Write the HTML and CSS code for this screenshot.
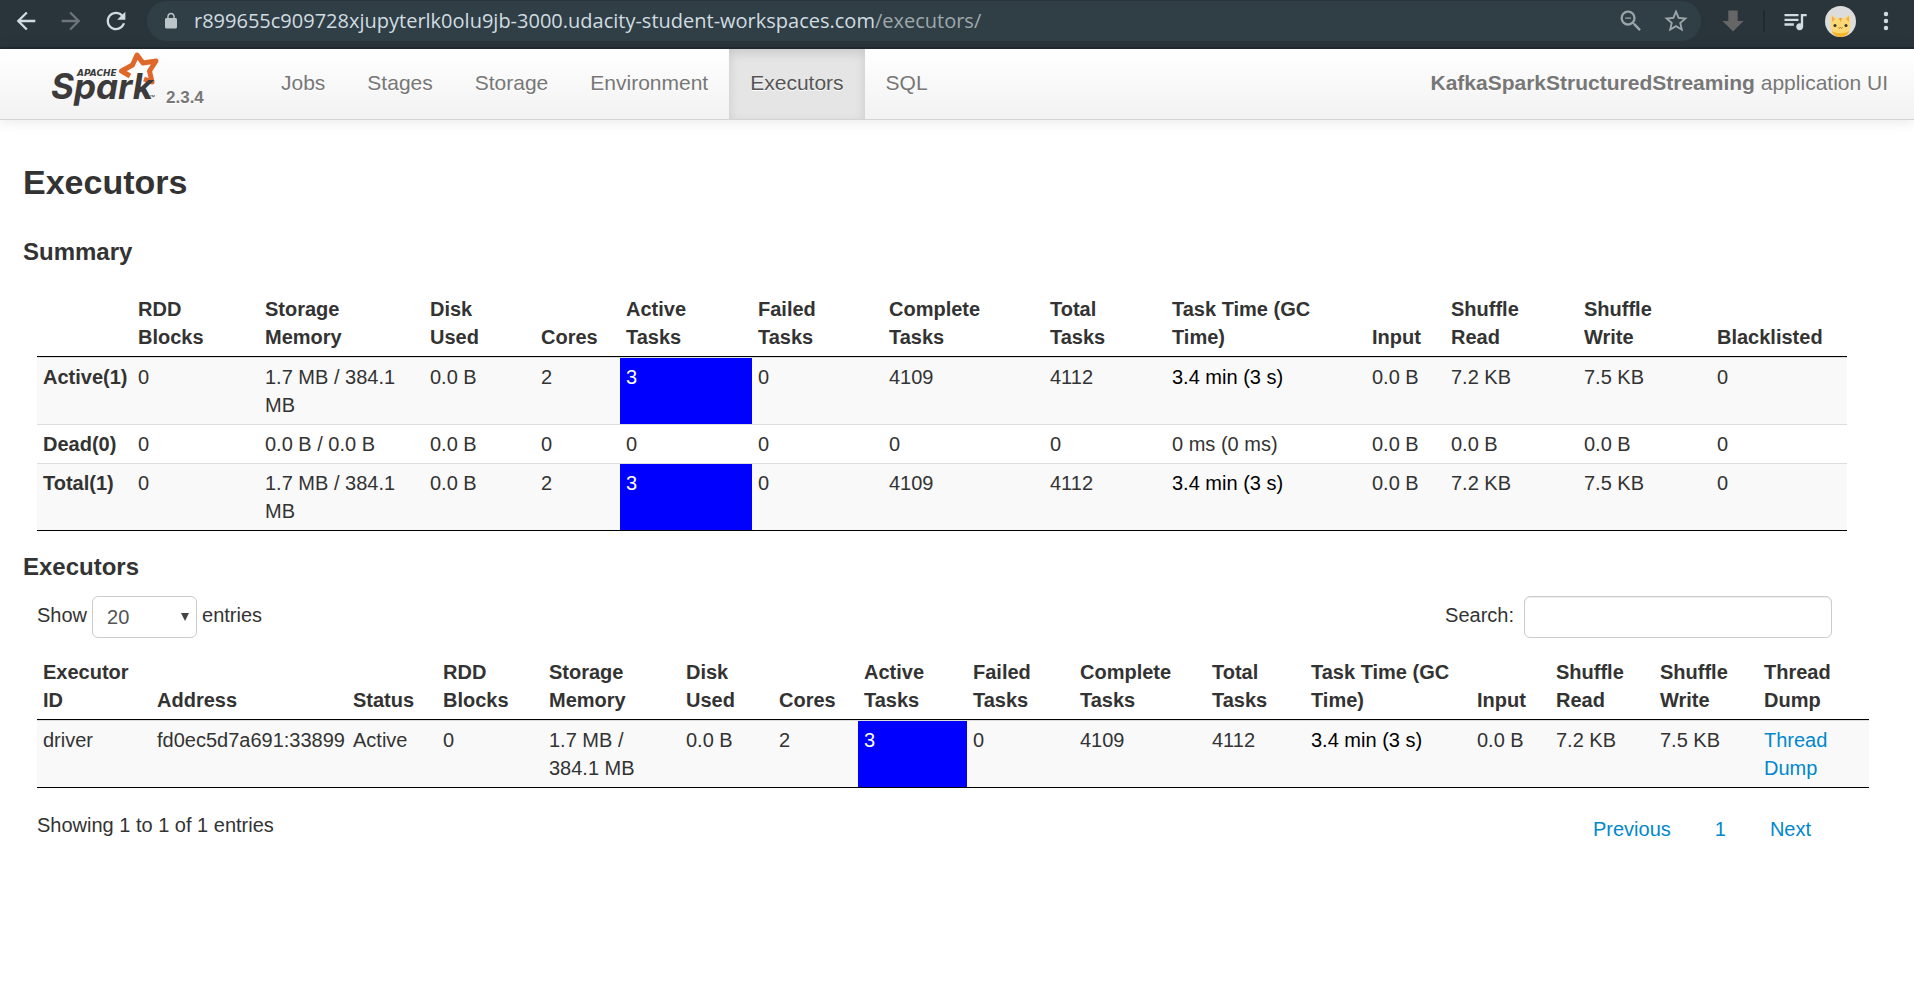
FILE: index.html
```html
<!DOCTYPE html>
<html lang="en">
<head>
<meta charset="utf-8">
<title>KafkaSparkStructuredStreaming - Executors</title>
<link rel="stylesheet" href="styles.css">
</head>
<body>
<header class="toolbar">
  <div class="history">
    <button class="icon-btn" aria-label="Back"><svg viewBox="0 0 24 24"><path d="M20 11H7.83l5.59-5.59L12 4l-8 8 8 8 1.41-1.41L7.83 13H20v-2z"/></svg></button>
    <button class="icon-btn dim" aria-label="Forward"><svg viewBox="0 0 24 24"><path d="M12 4l-1.41 1.41L16.17 11H4v2h12.17l-5.58 5.59L12 20l8-8z"/></svg></button>
    <button class="icon-btn" aria-label="Reload"><svg viewBox="0 0 24 24"><path d="M17.65 6.35C16.2 4.9 14.21 4 12 4c-4.42 0-7.99 3.58-7.99 8s3.57 8 7.99 8c3.73 0 6.84-2.55 7.73-6h-2.08c-.82 2.33-3.04 4-5.65 4-3.31 0-6-2.69-6-6s2.69-6 6-6c1.66 0 3.14.69 4.22 1.78L13 11h7V4l-2.35 2.35z"/></svg></button>
  </div>
  <div class="omnibox">
    <svg class="lock" viewBox="0 0 24 24"><path d="M18 8h-1V6c0-2.76-2.24-5-5-5S7 3.24 7 6v2H6c-1.100 0-2 .9-2 2v10c0 1.100.9 2 2 2h12c1.100 0 2-.9 2-2V10c0-1.100-.9-2-2-2zM8.900 6c0-1.710 1.390-3.100 3.100-3.100s3.100 1.390 3.100 3.100v2H8.900V6z"/></svg>
    <span class="url"><span class="host">r899655c909728xjupyterlk0olu9jb-3000.udacity-student-workspaces.com</span>/executors/</span>
    <button class="icon-btn soft" aria-label="Zoom"><svg viewBox="0 0 24 24"><path d="M15.500 14h-.79l-.28-.27A6.471 6.471 0 0 0 16 9.500 6.500 6.500 0 1 0 9.500 16c1.610 0 3.090-.59 4.230-1.570l.27.28v.79l5 4.990L20.490 19l-4.990-5zm-6 0C7.010 14 5 11.990 5 9.500S7.010 5 9.500 5 14 7.010 14 9.500 11.990 14 9.500 14zM7 9h5v1H7z"/></svg></button>
    <button class="icon-btn soft" aria-label="Bookmark"><svg viewBox="0 0 24 24"><path d="M22 9.240l-7.190-.62L12 2 9.190 8.630 2 9.240l5.460 4.730L5.820 21 12 17.270 18.180 21l-1.630-7.030L22 9.240zM12 15.400l-3.760 2.270 1-4.280-3.320-2.880 4.380-.38L12 6.100l1.710 4.040 4.380.38-3.320 2.880 1 4.280L12 15.400z"/></svg></button>
  </div>
  <div class="tools">
    <button class="icon-btn muted" aria-label="Downloads"><svg viewBox="0 0 24 24"><path d="M8 3h8v9h5l-9 9-9-9h5z"/></svg></button>
    <span class="separator"></span>
    <button class="icon-btn" aria-label="Media"><svg viewBox="0 0 24 24"><path d="M15 6H3v2h12V6zm0 4H3v2h12v-2zM3 16h8v-2H3v2zM17 6v8.180c-.31-.11-.65-.18-1-.18-1.660 0-3 1.340-3 3s1.340 3 3 3 3-1.340 3-3V8h3V6h-5z"/></svg></button>
    <button class="avatar" aria-label="Profile"><svg viewBox="0 0 31 31">
      <circle cx="15.500" cy="15.500" r="15.500" fill="#dcdcdc"/>
      <path d="M6.500 9c1.500 0 3 1.500 4.500 3h9c1.500-1.500 3-3 4.500-3 .8 3 .8 7 .8 10 0 7-4 11.500-9.800 11.500S5.700 26 5.700 19c0-3 0-7 .8-10z" fill="#fbd873"/>
      <path d="M7 10l3 3-3 3zM24 10l-3 3 3 3z" fill="#f3a95b"/>
      <path d="M6.500 25c5 3 13 3 18 0-1.500 3.500-4.500 6-9 6s-7.500-2.500-9-6z" fill="#f7b52c"/>
      <path d="M14 12l1.500 4 1.500-4z" fill="#e89a44"/>
      <circle cx="10" cy="19.500" r="1.500" fill="#333"/><circle cx="21" cy="19.500" r="1.500" fill="#333"/>
      <path d="M13.500 21.500q1 1.500 2 0 1 1.500 2 0" fill="none" stroke="#a5672c"/>
    </svg></button>
    <button class="icon-btn" aria-label="Menu"><svg viewBox="0 0 24 24"><circle cx="12" cy="6" r="1.900"/><circle cx="12" cy="12" r="1.900"/><circle cx="12" cy="18" r="1.900"/></svg></button>
  </div>
</header>

<nav class="navbar">
  <a class="brand" href="#">
    <svg class="logo" viewBox="48 50 112 60" role="img" aria-label="Apache Spark">
      <path d="M130 76L121.500 71L132.500 65L137 55L143 63L156 61L149.500 71L152 82L144 79" fill="none" stroke="#e0672a" stroke-width="5" stroke-linejoin="round"/>
      <text x="77" y="76" class="logo-small">APACHE</text>
      <text x="51" y="99" class="logo-name">Spark</text>
      <text x="149" y="99" class="logo-tm">™</text>
    </svg>
    <span class="version">2.3.4</span>
  </a>
  <ul class="tabs">
    <li><a href="#">Jobs</a></li>
    <li><a href="#">Stages</a></li>
    <li><a href="#">Storage</a></li>
    <li><a href="#">Environment</a></li>
    <li><a class="active" href="#">Executors</a></li>
    <li><a href="#">SQL</a></li>
  </ul>
  <p class="app-name"><strong>KafkaSparkStructuredStreaming</strong> application UI</p>
</nav>

<main class="page">
  <h1>Executors</h1>
  <h2>Summary</h2>
  <div class="summary">
    <table class="grid">
      <colgroup><col class="w95"><col class="w127"><col class="w165"><col class="w111"><col class="w85"><col class="w132"><col class="w131"><col class="w161"><col class="w122"><col class="w200"><col class="w79"><col class="w133"><col class="w133"><col class="w136"></colgroup>
      <thead>
        <tr><th></th><th>RDD<br>Blocks</th><th>Storage<br>Memory</th><th>Disk<br>Used</th><th>Cores</th><th>Active<br>Tasks</th><th>Failed<br>Tasks</th><th>Complete<br>Tasks</th><th>Total<br>Tasks</th><th>Task Time (GC<br>Time)</th><th>Input</th><th>Shuffle<br>Read</th><th>Shuffle<br>Write</th><th>Blacklisted</th></tr>
      </thead>
      <tbody>
        <tr><th>Active(1)</th><td>0</td><td>1.7 MB / 384.1 MB</td><td>0.0 B</td><td>2</td><td class="busy">3</td><td>0</td><td>4109</td><td>4112</td><td class="time">3.4 min (3 s)</td><td>0.0 B</td><td>7.2 KB</td><td>7.5 KB</td><td>0</td></tr>
        <tr><th>Dead(0)</th><td>0</td><td>0.0 B / 0.0 B</td><td>0.0 B</td><td>0</td><td>0</td><td>0</td><td>0</td><td>0</td><td>0 ms (0 ms)</td><td>0.0 B</td><td>0.0 B</td><td>0.0 B</td><td>0</td></tr>
        <tr><th>Total(1)</th><td>0</td><td>1.7 MB / 384.1 MB</td><td>0.0 B</td><td>2</td><td class="busy">3</td><td>0</td><td>4109</td><td>4112</td><td class="time">3.4 min (3 s)</td><td>0.0 B</td><td>7.2 KB</td><td>7.5 KB</td><td>0</td></tr>
      </tbody>
    </table>
  </div>

  <h2>Executors</h2>
  <div class="executors">
    <div class="controls">
      <label class="length">Show
        <span class="select-wrap"><select><option>20</option><option>40</option><option>60</option><option>100</option></select></span>
        entries</label>
      <label class="search">Search: <input type="search"></label>
    </div>
    <table class="grid">
      <colgroup><col class="w114"><col class="w196"><col class="w90"><col class="w106"><col class="w137"><col class="w93"><col class="w85"><col class="w109"><col class="w107"><col class="w132"><col class="w99"><col class="w166"><col class="w79"><col class="w104"><col class="w104"><col class="w111"></colgroup>
      <thead>
        <tr><th>Executor<br>ID</th><th>Address</th><th>Status</th><th>RDD<br>Blocks</th><th>Storage<br>Memory</th><th>Disk<br>Used</th><th>Cores</th><th>Active<br>Tasks</th><th>Failed<br>Tasks</th><th>Complete<br>Tasks</th><th>Total<br>Tasks</th><th>Task Time (GC<br>Time)</th><th>Input</th><th>Shuffle<br>Read</th><th>Shuffle<br>Write</th><th>Thread<br>Dump</th></tr>
      </thead>
      <tbody>
        <tr><td>driver</td><td class="address">fd0ec5d7a691:33899</td><td>Active</td><td>0</td><td>1.7 MB / 384.1 MB</td><td>0.0 B</td><td>2</td><td class="busy">3</td><td>0</td><td>4109</td><td>4112</td><td class="time">3.4 min (3 s)</td><td>0.0 B</td><td>7.2 KB</td><td>7.5 KB</td><td><a href="#">Thread Dump</a></td></tr>
      </tbody>
    </table>
    <div class="footer">
      <p class="info">Showing 1 to 1 of 1 entries</p>
      <div class="pages"><a href="#">Previous</a><a href="#">1</a><a href="#">Next</a></div>
    </div>
  </div>
</main>
</body>
</html>
```
FILE: styles.css
```css
* { box-sizing: border-box; }

body {
  margin: 0;
  background: #fff;
  color: #333;
  font: 20px/28px "Liberation Sans", Arial, sans-serif;
}

h1, h2, p, ul { margin: 0; padding: 0; }
a { color: #08c; text-decoration: none; }
button { border: 0; padding: 0; background: none; }

/* Browser toolbar */
.toolbar {
  display: flex;
  height: 49px;
  padding: 1px 14px 5px 12px;
  background: #2a343b;
  border-bottom: 2px solid #1f2a32;
}
.history, .tools { display: flex; align-items: center; height: 40px; }
.history { gap: 17px; margin-right: 17px; }
.tools { gap: 16px; margin-left: 18px; }
.icon-btn { display: block; width: 28px; height: 28px; fill: #d0dce1; }
.icon-btn svg, .avatar svg { display: block; width: 100%; height: 100%; }
.dim { fill: #6b757a; }
.soft { fill: #9ca5a9; }
.muted { fill: #666; }
.separator { width: 2px; height: 22px; background: #1f2a32; }
.avatar { width: 31px; height: 31px; }
.omnibox {
  flex: 1;
  display: flex;
  align-items: center;
  gap: 14px;
  height: 40px;
  padding: 0 11px 0 15px;
  border-radius: 20px;
  background: #303e45;
}
.omnibox .soft + .soft { margin-left: 3px; }
.lock { width: 18px; height: 18px; fill: #bcc5c9; }
.url { flex: 1; color: #9fa9ad; font: 20px/28px "Open Sans", "Noto Sans", sans-serif; white-space: nowrap; }
.host { color: #d0dce1; }

/* Application navigation */
.navbar {
  display: flex;
  height: 71px;
  padding: 0 26px 0 48px;
  border-bottom: 1px solid #d4d4d4;
  background: linear-gradient(#fff, #f2f2f2);
  box-shadow: 0 1px 14px rgba(0, 0, 0, 0.1);
  text-shadow: 0 1px 0 #fff;
  font-size: 21px;
  color: #777;
}
.brand { display: flex; gap: 6px; width: 212px; color: #777; }
.logo { width: 112px; height: 60px; margin-top: 1px; }
.logo text { fill: #3c3a3b; font-style: italic; text-shadow: none; }
.logo-small { font: bold 9px "DejaVu Sans", sans-serif; }
.logo-name { font: bold 35px Inter, sans-serif; }
.logo-tm { font: 6px "Liberation Sans", sans-serif; }
.version { padding-top: 35px; font-size: 17px; font-weight: bold; }
.tabs { display: flex; list-style: none; }
.tabs a { display: block; height: 70px; padding: 20px 21px; color: #777; }
.tabs .active { color: #555; background: #e5e5e5; box-shadow: inset 0 4px 11px rgba(0, 0, 0, 0.125); }
.app-name { margin-left: auto; padding-top: 20px; }

/* Page content */
.page { padding: 34px 45px 28px 23px; }
h1 { font-size: 34px; line-height: 56px; }
h2 { font-size: 24px; line-height: 28px; }
h1 + h2 { margin-top: 28px; }
.summary { padding: 24px 23px 22px 14px; }
.executors { padding: 15px 0 0 14px; }

.grid {
  width: 100%;
  table-layout: fixed;
  border-collapse: separate;
  border-spacing: 0;
  border-bottom: 1px solid #000;
}
.grid th, .grid td { padding: 5px 5px 5px 6px; text-align: left; vertical-align: top; }
.grid thead th { vertical-align: bottom; border-bottom: 1px solid #000; }
.grid tbody th, .grid tbody td { border-top: 1px solid #ddd; background-clip: padding-box; }
.grid tbody th { white-space: nowrap; }
.grid tbody tr:nth-child(odd) > * { background-color: #f9f9f9; }
.grid tbody tr > .busy { background-color: #00f; color: #fff; }
.grid .time { color: #000; }
.grid .address { white-space: nowrap; }

.w79 { width: 79px; }
.w85 { width: 85px; }
.w90 { width: 90px; }
.w93 { width: 93px; }
.w95 { width: 95px; }
.w99 { width: 99px; }
.w104 { width: 104px; }
.w106 { width: 106px; }
.w107 { width: 107px; }
.w109 { width: 109px; }
.w111 { width: 111px; }
.w114 { width: 114px; }
.w122 { width: 122px; }
.w127 { width: 127px; }
.w131 { width: 131px; }
.w132 { width: 132px; }
.w133 { width: 133px; }
.w136 { width: 136px; }
.w137 { width: 137px; }
.w161 { width: 161px; }
.w165 { width: 165px; }
.w166 { width: 166px; }
.w196 { width: 196px; }
.w200 { width: 200px; }

.controls { display: flex; justify-content: space-between; padding: 0 37px 15px 0; }
.controls label { display: flex; line-height: 38px; }
.length { gap: 5px; }
.search { gap: 10px; }
.select-wrap { display: block; position: relative; }
.select-wrap::after {
  content: "";
  position: absolute;
  top: 17px;
  right: 8px;
  border: 4px solid transparent;
  border-top: 8px solid #444;
  border-bottom: 0;
  pointer-events: none;
}
select, input {
  height: 42px;
  border: 1px solid #ccc;
  border-radius: 6px;
  background: #fff;
  color: #555;
  font: 20px/28px "Liberation Sans", Arial, sans-serif;
}
select { width: 105px; padding: 0 14px; appearance: none; }
input { width: 308px; padding: 0 8px; box-shadow: inset 0 1px 1px rgba(0, 0, 0, 0.075); }

.footer { display: flex; justify-content: space-between; padding: 23px 36px 0 0; }
.pages { display: flex; padding-top: 4px; }
.pages a { padding: 0 22px; }
```
